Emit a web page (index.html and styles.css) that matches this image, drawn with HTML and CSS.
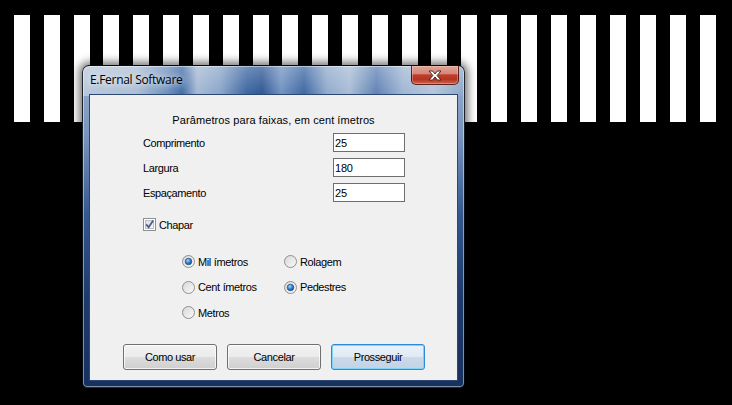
FILE: index.html
```html
<!DOCTYPE html>
<html lang="pt">
<head>
<meta charset="utf-8">
<title>E.Fernal Software</title>
<link rel="stylesheet" href="styles.css">
</head>
<body>
<svg class="defs" width="0" height="0" aria-hidden="true">
  <defs>
    <linearGradient id="boxFill" x1="0" y1="0" x2="1" y2="1">
      <stop offset="0" stop-color="#d9dce1"/>
      <stop offset="1" stop-color="#f8f9fa"/>
    </linearGradient>
    <linearGradient id="radioFill" x1="0" y1="0" x2="1" y2="1">
      <stop offset="0" stop-color="#d6d6d6"/>
      <stop offset="1" stop-color="#fbfbfb"/>
    </linearGradient>
    <radialGradient id="dotFill" cx="0.4" cy="0.35" r="0.7">
      <stop offset="0" stop-color="#a9dcf8"/>
      <stop offset="0.55" stop-color="#2f7cc8"/>
      <stop offset="1" stop-color="#164c8f"/>
    </radialGradient>
  </defs>
</svg>

<div class="crossing">
  <span class="stripe"></span><span class="stripe"></span><span class="stripe"></span><span class="stripe"></span>
  <span class="stripe"></span><span class="stripe"></span><span class="stripe"></span><span class="stripe"></span>
  <span class="stripe"></span><span class="stripe"></span><span class="stripe"></span><span class="stripe"></span>
  <span class="stripe"></span><span class="stripe"></span><span class="stripe"></span><span class="stripe"></span>
  <span class="stripe"></span><span class="stripe"></span><span class="stripe"></span><span class="stripe"></span>
  <span class="stripe"></span><span class="stripe"></span><span class="stripe"></span><span class="stripe"></span>
</div>

<div class="window">
  <div class="titlebar">
    <span class="title">E.Fernal Software</span>
    <button class="close" type="button" aria-label="Fechar">
      <svg width="14" height="11" viewBox="0 0 14 11">
        <path d="M1 1H4.6L7 4L9.4 1H13L9.1 5.5L13 10H9.4L7 7L4.6 10H1L4.9 5.5Z" fill="#fff" stroke="#4a2a26" stroke-width="1" stroke-linejoin="round"/>
      </svg>
    </button>
  </div>

  <div class="client">
    <p class="heading">Parâmetros para faixas, em cent<span class="wide">í</span>metros</p>

    <div class="fields">
      <div class="field-row">
        <span class="text">Comprimento</span>
        <input class="box" type="text" value="25">
      </div>
      <div class="field-row">
        <span class="text">Largura</span>
        <input class="box" type="text" value="180">
      </div>
      <div class="field-row">
        <span class="text">Espaçamento</span>
        <input class="box" type="text" value="25">
      </div>
    </div>

    <div class="check">
      <svg width="13" height="13" viewBox="0 0 13 13">
        <rect x="0.5" y="0.5" width="12" height="12" fill="#fff" stroke="#8e8f8f"/>
        <rect x="2.5" y="2.5" width="8" height="8" fill="url(#boxFill)" stroke="#b9c0c8"/>
        <path d="M3.2 6.4L5.6 9.3L10.2 2.4" fill="none" stroke="#4c5e88" stroke-width="1.8"/>
      </svg>
      <span class="text">Chapar</span>
    </div>

    <div class="options">
      <div class="option">
        <svg width="13" height="13" viewBox="0 0 13 13">
          <circle cx="6.5" cy="6.5" r="6" fill="url(#radioFill)" stroke="#8e8f8f"/>
          <circle cx="6.5" cy="6.5" r="3.3" fill="url(#dotFill)" stroke="#24508a" stroke-width="0.7"/>
        </svg>
        <span class="text">Mil<span class="wide">í</span>metros</span>
      </div>
      <div class="option">
        <svg width="13" height="13" viewBox="0 0 13 13">
          <circle cx="6.5" cy="6.5" r="6" fill="url(#radioFill)" stroke="#8e8f8f"/>
        </svg>
        <span class="text">Rolagem</span>
      </div>
      <div class="option">
        <svg width="13" height="13" viewBox="0 0 13 13">
          <circle cx="6.5" cy="6.5" r="6" fill="url(#radioFill)" stroke="#8e8f8f"/>
        </svg>
        <span class="text">Cent<span class="wide">í</span>metros</span>
      </div>
      <div class="option">
        <svg width="13" height="13" viewBox="0 0 13 13">
          <circle cx="6.5" cy="6.5" r="6" fill="url(#radioFill)" stroke="#8e8f8f"/>
          <circle cx="6.5" cy="6.5" r="3.3" fill="url(#dotFill)" stroke="#24508a" stroke-width="0.7"/>
        </svg>
        <span class="text">Pedestres</span>
      </div>
      <div class="option">
        <svg width="13" height="13" viewBox="0 0 13 13">
          <circle cx="6.5" cy="6.5" r="6" fill="url(#radioFill)" stroke="#8e8f8f"/>
        </svg>
        <span class="text">Metros</span>
      </div>
    </div>

    <div class="actions">
      <button class="btn" type="button">Como usar</button>
      <button class="btn" type="button">Cancelar</button>
      <button class="btn btn-default" type="button">Prosseguir</button>
    </div>
  </div>
</div>
</body>
</html>
```

FILE: styles.css
```css
html, body {
  margin: 0;
  padding: 0;
}

body {
  width: 732px;
  height: 405px;
  overflow: hidden;
  position: relative;
  background: #000;
  font-family: "Liberation Sans", Arial, sans-serif;
  font-size: 11px;
  color: #000;
}

.defs {
  position: absolute;
  width: 0;
  height: 0;
}

/* zebra crossing drawn on the desktop */
.crossing {
  display: flex;
  justify-content: space-between;
  height: 107px;
  margin-top: 15px;
  padding: 0 16px 0 14px;
}

.stripe {
  width: 16px;
  background: #fff;
}

/* Aero style window */
.window {
  position: absolute;
  left: 82px;
  top: 65px;
  width: 383px;
  height: 323px;
  box-sizing: border-box;
  display: flex;
  flex-direction: column;
  padding: 0 6px 6px;
  border: 1px solid rgba(0, 0, 0, 0.8);
  border-radius: 7px 7px 5px 5px;
  background:
    linear-gradient(to bottom, rgba(255, 255, 255, 0.28), rgba(255, 255, 255, 0) 30px),
    linear-gradient(90deg,
      #b7c7da 0%, #aabdd4 14%, #6d8fbd 22%, #3f6aa6 26%, #a3b8d2 30%,
      #88a4c9 36%, #3a64a0 43%, #2b5593 47%, #6f91bf 52%, #3b65a1 58%,
      #8fa9cc 64%, #a7bbd4 70%, #5c80b3 77%, #9eb5d2 84%, #b2c4da 92%, #8aa5c8 100%) top / 100% 30px no-repeat,
    linear-gradient(to bottom, #98afcd 0, #7894bd 70px, #34578f 150px, #1e3b6d 230px, #17315f 100%);
  box-shadow:
    0 0 9px 3px rgba(0, 0, 0, 0.55),
    inset 0 0 0 1px rgba(255, 255, 255, 0.45);
}

.titlebar {
  display: flex;
  align-items: flex-start;
  height: 28px;
  margin: 0 -6px;
  padding: 0 5px 0 7px;
}

.title {
  margin-top: 6px;
  font-family: "Open Sans", "Noto Sans", sans-serif;
  font-size: 12px;
  line-height: 16px;
  letter-spacing: -0.3px;
  color: #000;
  text-shadow: 0 0 6px rgba(255, 255, 255, 0.9), 0 0 10px rgba(255, 255, 255, 0.6);
}

.close {
  margin-left: auto;
  width: 48px;
  height: 19px;
  padding: 0;
  display: flex;
  align-items: center;
  justify-content: center;
  border: 1px solid rgba(70, 14, 8, 0.85);
  border-top: none;
  border-radius: 0 0 5px 5px;
  background: linear-gradient(to bottom,
    #e2a597 0%, #d4887a 42%, #c03d2b 50%, #b53422 74%, #cd634c 100%);
  box-shadow: inset 0 0 0 1px rgba(255, 220, 210, 0.35);
}

.client {
  height: 287px;
  box-sizing: border-box;
  background: #f0f0f0;
  border: 1px solid #2c4872;
  padding-top: 18px;
}

.heading {
  margin: 0;
  line-height: 14px;
  text-align: center;
  letter-spacing: 0.1px;
}

.wide {
  margin-left: 3px;
}

.text {
  line-height: 14px;
  letter-spacing: -0.4px;
  white-space: nowrap;
}

.fields {
  display: flex;
  flex-direction: column;
  gap: 6px;
  margin-top: 6px;
  padding: 0 52px 0 53px;
}

.field-row {
  display: flex;
  align-items: center;
  justify-content: space-between;
  height: 19px;
}

.box {
  width: 72px;
  height: 19px;
  box-sizing: border-box;
  margin: 0;
  padding: 0 1px;
  border: 1px solid #6e6e6e;
  background: #fff;
  font-family: "Liberation Sans", Arial, sans-serif;
  font-size: 11px;
  letter-spacing: -0.2px;
  color: #000;
  outline: none;
}

.check {
  display: flex;
  align-items: center;
  gap: 3px;
  height: 13px;
  margin: 16px 0 0 53px;
}

.options {
  display: grid;
  grid-template-columns: 102px auto;
  grid-auto-rows: 13px;
  row-gap: 12.5px;
  margin: 24px 0 0 92px;
}

.option {
  display: flex;
  align-items: center;
  gap: 3px;
}

.actions {
  display: flex;
  gap: 10px;
  margin: 25px 0 0 33px;
}

.btn {
  width: 94px;
  height: 26px;
  padding: 0;
  border: 1px solid #707070;
  border-radius: 3px;
  background: linear-gradient(to bottom, #f2f2f2 0%, #ebebeb 50%, #dddddd 50%, #cfcfcf 100%);
  box-shadow: inset 0 0 0 1px rgba(255, 255, 255, 0.75);
  font-family: "Liberation Sans", Arial, sans-serif;
  font-size: 11px;
  letter-spacing: -0.4px;
  color: #000;
}

.btn-default {
  border-color: #2f8ad4;
  background: linear-gradient(to bottom, #eaf2fa 0%, #e0eaf4 50%, #cbdaea 50%, #c1d3e6 100%);
  box-shadow: inset 0 0 0 1px #7fd3f6;
}
```
